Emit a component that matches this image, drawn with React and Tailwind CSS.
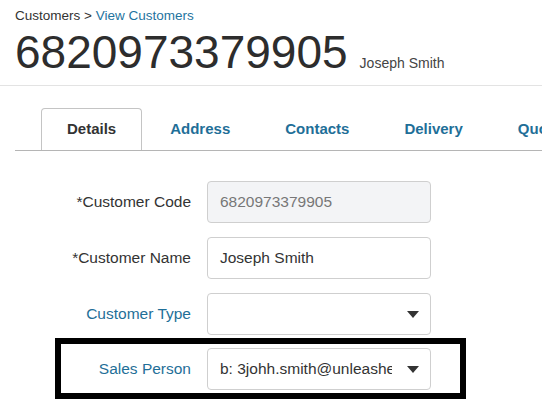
function Caret() {
  return (
    <svg width="12" height="7" viewBox="0 0 12 7" className="shrink-0">
      <path d="M0 0 H12 L6 7 Z" fill="#333" />
    </svg>
  )
}

function Row({ label, blue, boxed, className = '', children }) {
  return (
    <div
      className={`flex items-center gap-4 pr-[29px] ${
        boxed ? 'border-[6px] border-black pt-[4px] pb-[3px]' : 'mx-[6px]'
      } ${className}`}
    >
      <label className={`w-[130px] text-right text-[15.5px] ${blue ? 'text-[#1f6f98]' : 'text-[#333]'}`}>
        {label}
      </label>
      {children}
    </div>
  )
}

export default function App() {
  const tabs = ['Address', 'Contacts', 'Delivery', 'Quotes']

  return (
    <div className="min-h-screen overflow-hidden bg-white font-['Liberation_Sans',Arial,sans-serif] text-[#333]">
      <div className="border-b border-[#e3e3e3] px-[15px] pt-[8px] pb-[10px]">
        <div className="text-[13.5px] leading-[16px]">
          Customers &gt; <span className="text-[#1f74a0]">View Customers</span>
        </div>
        <div className="mt-[5px] flex items-baseline gap-[12px]">
          <h1 className="text-[46px] leading-[46px] text-[#2d2d2d]">6820973379905</h1>
          <span className="text-[14px] text-[#444]">Joseph Smith</span>
        </div>
      </div>

      <div className="ml-[15px] mt-[22px] flex whitespace-nowrap border-b border-[#b5b5b5] pl-[26px]">
        <div className="flex h-[42px] items-center rounded-t-[4px] border border-b-0 border-[#c4c4c4] px-[25px] text-[15px] font-bold text-[#333]">
          Details
        </div>
        {tabs.map(t => (
          <div key={t} className="ml-[1px] flex h-[42px] items-center px-[27px] text-[15px] font-bold text-[#1f6f98]">
            {t}
          </div>
        ))}
      </div>

      <div className="ml-[55px] mt-[30px] flex flex-col items-start">
        <Row label="*Customer Code">
          <div className="flex h-[42px] w-[224px] items-center rounded-[4px] border border-[#cfcfcf] bg-[#f3f4f6] px-[12px] text-[15.5px] text-[#777]">
            6820973379905
          </div>
        </Row>
        <Row label="*Customer Name" className="mt-[14px]">
          <div className="flex h-[42px] w-[224px] items-center rounded-[4px] border border-[#cfcfcf] bg-white px-[12px] text-[15.5px] text-[#333]">
            Joseph Smith
          </div>
        </Row>
        <Row label="Customer Type" blue className="mt-[14px]">
          <div className="flex h-[42px] w-[224px] items-center justify-end rounded-[4px] border border-[#cfcfcf] bg-white pr-[11px]">
            <Caret />
          </div>
        </Row>
        <Row label="Sales Person" blue boxed className="mt-[3px]">
          <div className="flex h-[42px] w-[224px] items-center gap-[15px] rounded-[4px] border border-[#cfcfcf] bg-white pl-[12px] pr-[11px]">
            <span className="w-[174px] overflow-hidden whitespace-nowrap text-[15.5px] text-[#333]">
              b: 3johh.smith@unleashedsoftware.com
            </span>
            <Caret />
          </div>
        </Row>
      </div>
    </div>
  )
}
